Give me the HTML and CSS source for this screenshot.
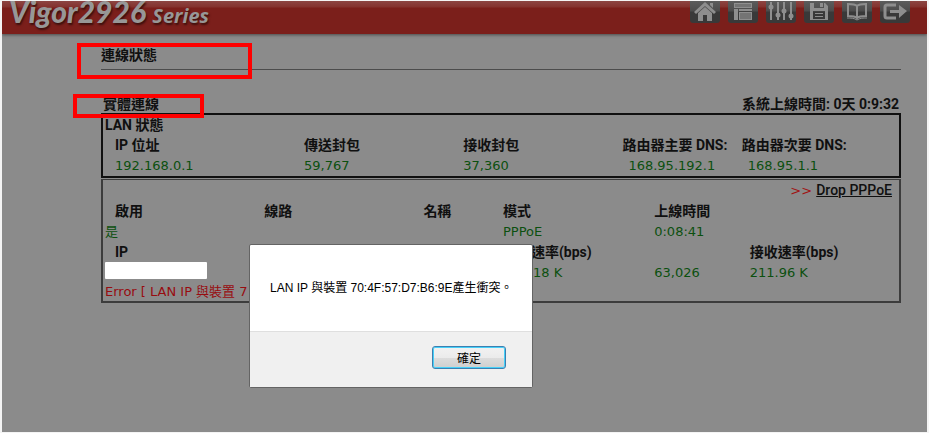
FILE: index.html
```html
<!DOCTYPE html>
<html lang="zh-Hant">
<head>
    <meta charset="UTF-8">
    <meta name="viewport" content="width=device-width, initial-scale=1.0">
    <title>Vigor2926 Series</title>
    <link rel="stylesheet" href="styles.css">
</head>
<body>

<div class="window">
    <header class="topbar">
        <div class="logo">Vigor2926 <span class="logo-series">Series</span></div>
        <nav class="toolbar">
            <a class="tool" href="#" aria-label="Home">
                <svg viewBox="0 0 30 22">
                    <path d="M4 11 15 1l11 10-2 2-9-8-9 8z"/>
                    <path d="M20 2h3v5l-3-3z"/>
                    <path d="M8 12l7-6 7 6v8h-5v-6h-4v6H8z"/>
                </svg>
            </a>
            <a class="tool" href="#" aria-label="Layout">
                <svg viewBox="0 0 30 22">
                    <path d="M6 2h18v5H6zM6 8h4v11H6zM11 8h13v2H11zM11 11h13v8H11z"/>
                    <path class="dim" d="M7 3h16v3H7zM12 12h11v6H12z"/>
                </svg>
            </a>
            <a class="tool" href="#" aria-label="Settings">
                <svg viewBox="0 0 30 22">
                    <path d="M4 1h2v18H4zM11 1h2v18h-2zM17 1h2v18h-2zM24 1h2v18h-2z"/>
                    <circle cx="5" cy="6" r="2.500"/>
                    <circle cx="12" cy="14" r="2.500"/>
                    <circle cx="18" cy="10" r="2.500"/>
                    <circle cx="25" cy="15" r="2.500"/>
                </svg>
            </a>
            <a class="tool" href="#" aria-label="Save">
                <svg viewBox="0 0 30 22">
                    <path fill-rule="evenodd" d="M6 2h15l3 3v14H6zM10 2v5h10V2zM9 10v8h12v-8z"/>
                    <path d="M16 2h3v4h-3zM11 12h8v1h-8zM11 15h8v1h-8z"/>
                </svg>
            </a>
            <a class="tool" href="#" aria-label="Manual">
                <svg viewBox="0 0 30 22">
                    <path class="line" d="M15 5c-2-2-5-2-9-2v12c4 0 7 0 9 2 2-2 5-2 9-2V3c-4 0-7 0-9 2zM15 5v12"/>
                    <path class="line thin" d="M5 17c4 0 7 0 10 2 3-2 6-2 10-2"/>
                </svg>
            </a>
            <a class="tool" href="#" aria-label="Logout">
                <svg viewBox="0 0 30 22">
                    <path class="line bold" d="M16 4H7q-2 0-2 2v9q0 2 2 2h9"/>
                    <path d="M10 9h9V4l8 6-8 7v-5h-9z"/>
                </svg>
            </a>
        </nav>
    </header>

    <main class="content">
        <h1 class="page-title">連線狀態<span class="mark mark-title"></span></h1>

        <div class="section-head">
            <h2>實體連線<span class="mark mark-section"></span></h2>
            <div class="uptime">系統上線時間: 0天 0:9:32</div>
        </div>

        <section class="box lan">
            <h3>LAN 狀態</h3>
            <table>
                <colgroup>
                    <col class="w24"><col class="w20"><col class="w20"><col class="w15"><col>
                </colgroup>
                <tr>
                    <th>IP 位址</th>
                    <th>傳送封包</th>
                    <th>接收封包</th>
                    <th>路由器主要 DNS:</th>
                    <th>路由器次要 DNS:</th>
                </tr>
                <tr>
                    <td>192.168.0.1</td>
                    <td>59,767</td>
                    <td>37,360</td>
                    <td class="dns">168.95.192.1</td>
                    <td class="dns">168.95.1.1</td>
                </tr>
            </table>
        </section>

        <section class="box wan">
            <div class="action">&gt;&gt; <a href="#">Drop PPPoE</a></div>
            <table>
                <colgroup>
                    <col class="w20"><col class="w20"><col class="w10"><col class="w19"><col class="w12"><col>
                </colgroup>
                <tr>
                    <th>啟用</th>
                    <th>線路</th>
                    <th>名稱</th>
                    <th>模式</th>
                    <th>上線時間</th>
                    <th></th>
                </tr>
                <tr>
                    <td>是</td>
                    <td></td>
                    <td></td>
                    <td>PPPoE</td>
                    <td>0:08:41</td>
                    <td></td>
                </tr>
                <tr>
                    <th>IP</th>
                    <th></th>
                    <th></th>
                    <th>傳送速率(bps)</th>
                    <th></th>
                    <th>接收速率(bps)</th>
                </tr>
                <tr>
                    <td class="address"><span class="blank"></span></td>
                    <td></td>
                    <td></td>
                    <td class="rate">.18 K</td>
                    <td>63,026</td>
                    <td>211.96 K</td>
                </tr>
            </table>
            <p class="error">Error [ LAN IP 與裝置 7</p>
        </section>
    </main>

    <div class="dialog" role="alertdialog" aria-labelledby="message">
        <p class="dialog-message" id="message">LAN IP 與裝置 70:4F:57:D7:B6:9E產生衝突。</p>
        <div class="dialog-footer">
            <button class="ok" type="button">確定</button>
        </div>
    </div>
</div>

</body>
</html>
```

FILE: styles.css
```css
* {
    box-sizing: border-box;
}

body {
    margin: 0;
    background-color: #f4f4f4;
    font-family: Roboto, "Noto Sans CJK TC", sans-serif;
    font-size: 14px;
    line-height: 20px;
    color: #101010;
}

.window {
    position: relative;
    min-height: calc(100vh - 2px);
    margin: 1px 2px;
    background-color: #8b8b8b;
    overflow: hidden;
}

/* top bar */
.topbar {
    display: flex;
    justify-content: space-between;
    align-items: flex-start;
    height: 33px;
    padding: 0 17px 0 7px;
    background: linear-gradient(#8c4542, #84322e 6px, #7b1f1b 7px);
    box-shadow: 0 1px 3px #4a4a4a;
}

.logo {
    height: 33px;
    line-height: 20px;
    font-family: Lato, sans-serif;
    font-size: 30px;
    font-weight: 900;
    font-style: italic;
    color: #979797;
    text-shadow: 1px 2px 2px #3c0f0d;
    white-space: nowrap;
}

.logo-series {
    font-family: "Open Sans", sans-serif;
    font-size: 20px;
    font-weight: bold;
}

.toolbar {
    display: flex;
    gap: 8px;
}

.tool {
    width: 30px;
    height: 22px;
    border-radius: 0 0 3px 3px;
    background: linear-gradient(#5c5c5c, #4c4c4c 10px, #393939 11px);
}

.tool svg {
    display: block;
    fill: #8e8e8e;
}

.tool .dim {
    fill: #747474;
}

.tool .line {
    fill: none;
    stroke: #8e8e8e;
    stroke-width: 2;
}

.tool .thin {
    stroke-width: 1;
}

.tool .bold {
    stroke-width: 3;
}

/* content */
.content {
    padding: 11px 26px 0 99px;
}

h1,
h2,
h3 {
    margin: 0;
    font-size: 14px;
    font-weight: bold;
}

.page-title {
    position: relative;
    height: 25px;
    border-bottom: 1px solid #4c4c4c;
}

.section-head {
    display: flex;
    justify-content: space-between;
    position: relative;
    margin-top: 24px;
    padding: 0 2px;
    height: 19px;
}

.uptime {
    font-weight: bold;
}

/* red frames over the headings */
.mark {
    position: absolute;
    border: 4px solid #ff0000;
}

.mark-title {
    left: -24px;
    top: -2px;
    width: 175px;
    height: 36px;
}

.mark-section {
    left: -28px;
    top: 0;
    width: 131px;
    height: 24px;
}

.box {
    border: 2px solid #101010;
}

.box h3 {
    padding-left: 2px;
}

.box table {
    width: 100%;
    table-layout: fixed;
    border-collapse: collapse;
}

.box th,
.box td {
    height: 20px;
    padding: 0 0 0 2px;
    text-align: left;
    white-space: nowrap;
}

.box td,
.error,
.action {
    font-family: "DejaVu Sans", "Noto Sans CJK TC", sans-serif;
    font-size: 13px;
}

.box td {
    padding-top: 1px;
    color: #0c500f;
}

.lan th,
.lan td {
    padding-left: 10px;
}

.lan th:first-child,
.lan td:first-child,
.wan th:first-child {
    padding-left: 12px;
}

.lan .dns {
    padding-left: 16px;
}

.wan {
    margin-top: 1px;
    border: 2px solid #3c3c3c;
    border-top-width: 1px;
}

.wan .rate {
    padding-left: 28px;
}

.wan .address {
    padding-top: 0;
    vertical-align: top;
}

.action {
    padding-right: 7px;
    text-align: right;
    color: #a01414;
}

.action a {
    font-family: Roboto, sans-serif;
    font-size: 14px;
    font-weight: 500;
    color: #101010;
}

.blank {
    display: block;
    width: 102px;
    height: 17px;
    border-radius: 1px;
    background-color: #ffffff;
}

.error {
    margin: 0;
    padding-left: 2px;
    line-height: 18px;
    color: #980c10;
}

.w10 { width: 10%; }
.w12 { width: 12%; }
.w15 { width: 15%; }
.w19 { width: 19%; }
.w20 { width: 20%; }
.w24 { width: 24%; }

/* alert dialog */
.dialog {
    position: absolute;
    left: 247px;
    top: 243px;
    width: 284px;
    border: 1px solid #646464;
    border-radius: 2px;
    background-color: #ffffff;
    font-family: "Liberation Sans", "Noto Sans CJK TC", sans-serif;
    font-size: 12px;
    color: #000000;
}

.dialog-message {
    margin: 0;
    padding: 33px 20px;
    white-space: nowrap;
}

.dialog-footer {
    display: flex;
    justify-content: flex-end;
    padding: 14px 26px 18px;
    border-top: 1px solid #dfdfdf;
    background-color: #f0f0f0;
}

.ok {
    width: 74px;
    height: 23px;
    padding: 0;
    border: 1px solid #3c7fb1;
    border-radius: 3px;
    background: linear-gradient(#f2f2f2, #ebebeb 50%, #dddddd 50%, #cfcfcf);
    box-shadow: inset 0 0 0 1px #46d0f8;
    font-family: "Noto Sans CJK TC", sans-serif;
    font-size: 12px;
    line-height: 20px;
    color: #000000;
}
```
